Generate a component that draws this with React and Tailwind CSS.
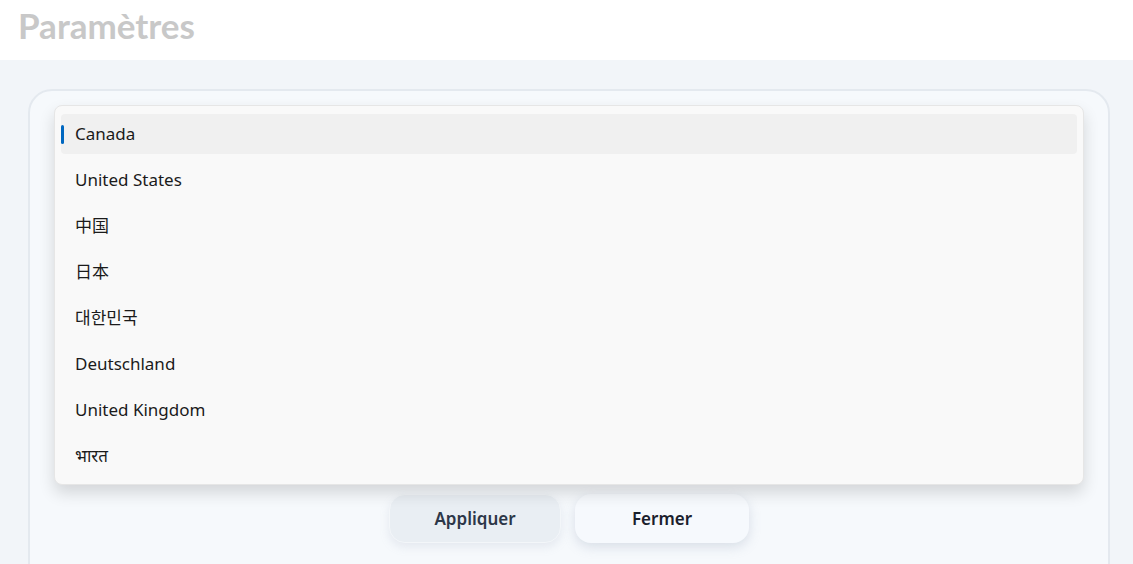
import React from 'react';

const COUNTRIES = ['Canada', 'United States', '中国', '日本', '대한민국', 'Deutschland', 'United Kingdom', 'भारत'];

const FONT = { fontFamily: '"Noto Sans", "Noto Sans CJK SC", "Noto Sans CJK KR", sans-serif' };

export default function App() {
  return (
    <div className="w-[1133px] h-[564px] overflow-hidden flex flex-col bg-[#f2f5f9]" style={FONT}>
      {/* Header */}
      <header className="h-[60px] shrink-0 bg-white flex items-center px-[18px]">
        <h1 className="text-[35px] font-bold text-[#c8c8c8] leading-none -mt-[10px]" style={{ fontFamily: 'Lato, sans-serif' }}>
          Paramètres
        </h1>
      </header>

      {/* Body */}
      <main className="flex-1 pt-[29px] pl-[28px] pr-[23px]">
        <div className="relative h-[520px] rounded-[24px] border-2 border-[#e4e9ef] bg-[#f6f9fc] px-[24px]">
          {/* Underlying fields */}
          <div className="flex flex-col pt-[64px]">
            <div className="h-[50px] border-r border-[#cfd4da]" />
            <div className="h-[50px] mt-[65px] border-r border-[#cfd4da]" />
            <div className="h-[50px] mt-[55px] border-r border-[#cfd4da]" />
          </div>

          {/* Actions */}
          <div className="absolute left-0 right-0 top-[403px] flex justify-center gap-[14px]">
            <button className="w-[172px] h-[49px] rounded-[16px] bg-[#e9eef3] border border-[#f3f6f9] shadow-[0_4px_10px_rgba(148,163,184,0.18)] text-[17px] font-semibold text-[#2d3748]">
              Appliquer
            </button>
            <button className="w-[174px] h-[49px] rounded-[16px] bg-[#f6f9fd] shadow-[0_4px_12px_rgba(148,163,184,0.3)] text-[17px] font-semibold text-[#1a202c]">
              Fermer
            </button>
          </div>

          {/* Dropdown list */}
          <ul className="absolute left-[24px] right-[24px] top-[14px] flex flex-col gap-[6px] p-[6px] py-[8px] rounded-[8px] border border-[#e6e6e6] bg-[#f9f9f9] shadow-[0_8px_16px_rgba(0,0,0,0.14)]">
            {COUNTRIES.map((c, i) => (
              <li
                key={c}
                className={
                  i === 0
                    ? 'relative h-[40px] flex items-center pl-[14px] rounded-[4px] bg-[#f0f0f0] text-[17px] text-[#1b1b1b]'
                    : 'relative h-[40px] flex items-center pl-[14px] rounded-[4px] text-[17px] text-[#1b1b1b]'
                }
              >
                {i === 0 && <span className="absolute left-0 top-[11px] w-[3px] h-[19px] rounded-full bg-[#0067c0]" />}
                {c}
              </li>
            ))}
          </ul>
        </div>
      </main>
    </div>
  );
}
